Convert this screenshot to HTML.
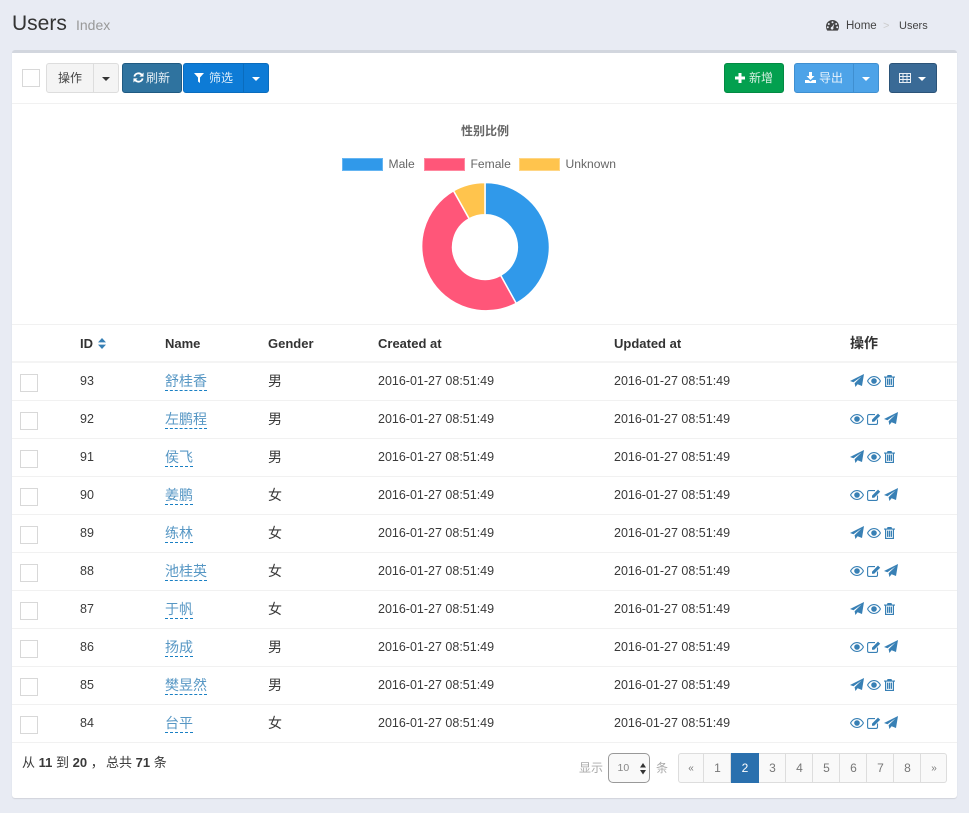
<!DOCTYPE html>
<html><head><meta charset="utf-8">
<style>
html,body{margin:0;padding:0;width:969px;height:813px;overflow:hidden;background:#e8ebf3;font-family:"Liberation Sans","Noto Sans CJK SC",sans-serif;color:#333;font-size:13px}
.a{position:absolute;white-space:nowrap}
#box{position:absolute;left:12px;top:50px;width:945px;height:745px;background:#fff;border-top:3px solid #d2d6de;border-radius:3px;box-shadow:0 1px 1px rgba(0,0,0,.1)}
.b{position:absolute;top:63px;height:30px;box-sizing:border-box;border:1px solid;text-align:center;line-height:28px;font-size:12px;color:#fff;white-space:nowrap}
.car{display:inline-block;width:0;height:0;border-left:4px solid transparent;border-right:4px solid transparent;border-top:4px solid currentColor;vertical-align:middle}
.l{position:absolute;left:12px;width:945px;height:1px;background:#f1f1f1}
.cb{position:absolute;left:20px;width:18px;height:18px;box-sizing:border-box;border:1px solid #d8d8d8;background:#fff}
.t{position:absolute;font-size:12.5px;white-space:nowrap;color:#3a3a3a;line-height:16px}
.n{position:absolute;left:165px;font-size:14px;line-height:18px;color:#5797c4;border-bottom:1px dashed #1a80c4;white-space:nowrap;height:18px}
.g{position:absolute;left:268px;font-size:14px;line-height:18px;color:#3a3a3a}
.h{position:absolute;top:336px;font-size:13px;font-weight:bold;line-height:16px;color:#333;white-space:nowrap}
.p{position:absolute;top:753px;height:30px;box-sizing:border-box;border:1px solid #ddd;border-left:0;padding-left:1px;background:#f9f9f9;color:#777;font-size:12px;line-height:29px;text-align:center}
svg{position:absolute;overflow:visible}
</style></head><body>
<svg width="0" height="0" style="position:absolute"><defs>
<symbol id="pl" viewBox="0 0 14 13"><path fill="#3880b5" d="M14 0L12 12 7.600 10.200 5.400 13 4.600 9.200 11.500 2.500 3.500 8.200 0 7Z"/></symbol>
<symbol id="ey" viewBox="0 0 14 10"><path fill="#3880b5" fill-rule="evenodd" d="M7 0C10 0 12.600 2 14 5 12.600 8 10 10 7 10 4 10 1.400 8 0 5 1.400 2 4 0 7 0ZM7 1.100C4.700 1.100 2.500 2.600 1.200 5 2.500 7.400 4.700 8.900 7 8.900 9.300 8.900 11.500 7.400 12.800 5 11.500 2.600 9.300 1.100 7 1.100ZM7 2.200A2.800 2.800 0 1 1 7 7.800 2.800 2.800 0 1 1 7 2.200Z"/></symbol>
<symbol id="tr" viewBox="0 0 11 12"><path fill="#3880b5" fill-rule="evenodd" d="M3.500 0H7.500L8 1.500H11V2.600H10V12H1V2.600H0V1.500H3ZM2.200 2.600V10.900H8.800V2.600ZM3 3.600H4.300V9.900H3ZM4.900 3.600H6.100V9.900H4.900ZM6.700 3.600H8V9.900H6.700Z"/></symbol>
<symbol id="ed" viewBox="0 0 14 12"><path fill="none" stroke="#3880b5" stroke-width="1.100" d="M10.500 6.500V10A1.400 1.400 0 0 1 9.100 11.400H2A1.400 1.400 0 0 1 .6 10V3A1.400 1.400 0 0 1 2 1.600H8"/><path fill="#3880b5" d="M11 .6L13.200 2.800 7.200 8.800H5V6.600Z"/></symbol>
</defs></svg>

<div class="a" style="left:12px;top:9px;font-size:21px;line-height:30px;color:#333">Users</div>
<div class="a" style="left:76px;top:16px;font-size:14px;line-height:18px;color:#999">Index</div>
<svg style="left:826px;top:20px" width="13" height="11" viewBox="0 0 13 11"><path fill="#444" fill-rule="evenodd" d="M6.500 0A6.500 6.500 0 0 1 13 6.500C13 8 12.500 9.500 11.700 10.600H1.300C.5 9.500 0 8 0 6.500A6.500 6.500 0 0 1 6.500 0ZM6.500 1.300A1 1 0 1 0 6.500 3.300 1 1 0 1 0 6.500 1.300ZM2.800 3A1 1 0 1 0 2.800 5 1 1 0 1 0 2.800 3ZM10.200 3A1 1 0 1 0 10.200 5 1 1 0 1 0 10.200 3ZM1.800 6.300A1 1 0 1 0 1.800 8.300 1 1 0 1 0 1.800 6.300ZM11.200 6.300A1 1 0 1 0 11.200 8.300 1 1 0 1 0 11.200 6.300ZM8.300 3.500L6 6.800A1.400 1.400 0 1 0 7.300 7.500Z"/></svg>
<div class="a" style="left:846px;top:19px;font-size:11.500px;line-height:15px;color:#444">Home</div>
<div class="a" style="left:883px;top:19px;font-size:11px;line-height:15px;color:#ccc">&gt;</div>
<div class="a" style="left:899px;top:19px;font-size:11px;line-height:15px;color:#444">Users</div>

<div id="box"></div>

<div class="a" style="left:22px;top:69px;width:18px;height:18px;box-sizing:border-box;border:1px solid #d8d8d8"></div>
<div class="b" style="left:46px;width:48px;background:#f4f4f4;border-color:#ddd;color:#444;border-radius:3px 0 0 3px">操作</div>
<div class="b" style="left:93px;width:26px;background:#f4f4f4;border-color:#ddd;color:#333;border-radius:0 3px 3px 0"><span class="car"></span></div>
<div class="b" style="left:122px;width:60px;background:#2f739f;border-color:#1f5a82;border-radius:3px;color:#e4eef5"><svg style="left:10px;top:8px" width="11" height="11" viewBox="0 0 12 12"><path fill="none" stroke="#fff" stroke-width="2" d="M1.500 5A4.600 4.600 0 0 1 9.800 3.500M10.500 7A4.600 4.600 0 0 1 2.200 8.500"/><path fill="#fff" d="M11.500 .5V5H7ZM.5 11.500V7H5Z"/></svg><span style="position:absolute;left:23px;top:0">刷新</span></div>
<div class="b" style="left:183px;width:61px;background:#0d7bd6;border-color:#0a6cbd;border-radius:3px 0 0 3px;color:#dcedfa"><svg style="left:10px;top:9px" width="10" height="10" viewBox="0 0 10 10"><path fill="#fff" d="M0 0H10L6 4.500V10L4 8.500V4.500Z"/></svg><span style="position:absolute;left:25px;top:0">筛选</span></div>
<div class="b" style="left:243px;width:26px;background:#0d7bd6;border-color:#0a6cbd;border-radius:0 3px 3px 0"><span class="car"></span></div>
<div class="b" style="left:724px;width:60px;background:#03a04f;border-color:#028a43;border-radius:3px;color:#d6f0e1"><svg style="left:10px;top:9px" width="10" height="10" viewBox="0 0 10 10"><path fill="#fff" d="M3.500 0H6.500V3.500H10V6.500H6.500V10H3.500V6.500H0V3.500H3.500Z"/></svg><span style="position:absolute;left:24px;top:0">新增</span></div>
<div class="b" style="left:794px;width:60px;background:#4da3e8;border-color:#3f8fd0;border-radius:3px 0 0 3px;color:#e8f3fc"><svg style="left:10px;top:8px" width="11" height="11" viewBox="0 0 11 11"><path fill="#fff" d="M4 0H7V4H9.500L5.500 8 1.500 4H4ZM0 8H3.500L5.500 9.500 7.500 8H11V11H0Z"/></svg><span style="position:absolute;left:24px;top:0">导出</span></div>
<div class="b" style="left:853px;width:26px;background:#4da3e8;border-color:#3f8fd0;border-radius:0 3px 3px 0"><span class="car"></span></div>
<div class="b" style="left:889px;width:48px;background:#3a6a96;border-color:#2b5378;border-radius:3px"><svg style="left:9px;top:9px" width="12" height="10" viewBox="0 0 12 10"><path fill="none" stroke="#e8eef4" stroke-width="1" d="M.5 .5H11.500V9.500H.5ZM.5 3.500H11.500M.5 6.500H11.500M4 .5V9.500M8 .5V9.500"/></svg><span class="car" style="position:absolute;left:28px;top:13px"></span></div>

<div class="l" style="top:103px"></div>

<div class="a" style="left:461px;top:123px;font-size:12px;font-weight:bold;line-height:16px;color:#666">性别比例</div>
<div class="a" style="left:342px;top:158px;width:41px;height:13px;box-sizing:border-box;background:#3099ea;border:1px solid #65b5f2"></div>
<div class="a" style="left:388.500px;top:156px;font-size:12.100px;line-height:16px;color:#666">Male</div>
<div class="a" style="left:424px;top:158px;width:41px;height:13px;box-sizing:border-box;background:#ff5679;border:1px solid #ff88a0"></div>
<div class="a" style="left:470.500px;top:156px;font-size:12.100px;line-height:16px;color:#666">Female</div>
<div class="a" style="left:519px;top:158px;width:41px;height:13px;box-sizing:border-box;background:#ffc44d;border:1px solid #ffd685"></div>
<div class="a" style="left:565.500px;top:156px;font-size:12.100px;line-height:16px;color:#666">Unknown</div>
<svg style="left:419.800px;top:182.300px" width="130" height="130" viewBox="-65 -65 130 130">
<g stroke="#fff" stroke-width="1.500">
<path fill="#3099ea" d="M0 -64.500A64.500 64.500 0 0 1 31.200 56.400L15.600 28.300A32.300 32.300 0 0 0 0 -32.300Z"/>
<path fill="#ff5679" d="M31.200 56.400A64.500 64.500 0 0 1 -31.500 -56.300L-15.800 -28.200A32.300 32.300 0 0 0 15.600 28.300Z"/>
<path fill="#ffc44d" d="M-31.500 -56.300A64.500 64.500 0 0 1 0 -64.500V-32.300A32.300 32.300 0 0 0 -15.800 -28.200Z"/>
</g></svg>

<div class="l" style="top:324px"></div>
<div class="h" style="left:80px">ID</div>
<svg style="left:98px;top:337.500px" width="8" height="11" viewBox="0 0 8 11"><path fill="#3880b5" d="M4 0L8 4.400H0ZM0 6.600H8L4 11Z"/></svg>
<div class="h" style="left:165px">Name</div>
<div class="h" style="left:268px">Gender</div>
<div class="h" style="left:378px">Created at</div>
<div class="h" style="left:614px">Updated at</div>
<div class="h" style="left:850px;font-size:14px;top:334px;line-height:18px">操作</div>
<div class="l" style="top:361px;height:2px;background:#f4f4f4"></div>

<div class="cb" style="top:374px"></div><div class="t" style="left:80px;top:373px">93</div><div class="n" style="top:372px">舒桂香</div><div class="g" style="top:372px">男</div><div class="t" style="left:378px;top:373px">2016-01-27 08:51:49</div><div class="t" style="left:614px;top:373px">2016-01-27 08:51:49</div>
<svg style="left:850px;top:374px" width="14" height="13"><use href="#pl" width="14" height="13"/></svg><svg style="left:867px;top:376px" width="14" height="10"><use href="#ey" width="14" height="10"/></svg><svg style="left:884px;top:375px" width="11" height="12"><use href="#tr" width="11" height="12"/></svg>
<div class="l" style="top:400px"></div>

<div class="cb" style="top:412px"></div><div class="t" style="left:80px;top:411px">92</div><div class="n" style="top:410px">左鹏程</div><div class="g" style="top:410px">男</div><div class="t" style="left:378px;top:411px">2016-01-27 08:51:49</div><div class="t" style="left:614px;top:411px">2016-01-27 08:51:49</div>
<svg style="left:850px;top:414px" width="14" height="10"><use href="#ey" width="14" height="10"/></svg><svg style="left:867px;top:412.500px" width="14" height="12"><use href="#ed" width="14" height="12"/></svg><svg style="left:884px;top:412px" width="14" height="13"><use href="#pl" width="14" height="13"/></svg>
<div class="l" style="top:438px"></div>

<div class="cb" style="top:450px"></div><div class="t" style="left:80px;top:449px">91</div><div class="n" style="top:448px">侯飞</div><div class="g" style="top:448px">男</div><div class="t" style="left:378px;top:449px">2016-01-27 08:51:49</div><div class="t" style="left:614px;top:449px">2016-01-27 08:51:49</div>
<svg style="left:850px;top:450px" width="14" height="13"><use href="#pl" width="14" height="13"/></svg><svg style="left:867px;top:452px" width="14" height="10"><use href="#ey" width="14" height="10"/></svg><svg style="left:884px;top:451px" width="11" height="12"><use href="#tr" width="11" height="12"/></svg>
<div class="l" style="top:476px"></div>

<div class="cb" style="top:488px"></div><div class="t" style="left:80px;top:487px">90</div><div class="n" style="top:486px">姜鹏</div><div class="g" style="top:486px">女</div><div class="t" style="left:378px;top:487px">2016-01-27 08:51:49</div><div class="t" style="left:614px;top:487px">2016-01-27 08:51:49</div>
<svg style="left:850px;top:490px" width="14" height="10"><use href="#ey" width="14" height="10"/></svg><svg style="left:867px;top:488.500px" width="14" height="12"><use href="#ed" width="14" height="12"/></svg><svg style="left:884px;top:488px" width="14" height="13"><use href="#pl" width="14" height="13"/></svg>
<div class="l" style="top:514px"></div>

<div class="cb" style="top:526px"></div><div class="t" style="left:80px;top:525px">89</div><div class="n" style="top:524px">练林</div><div class="g" style="top:524px">女</div><div class="t" style="left:378px;top:525px">2016-01-27 08:51:49</div><div class="t" style="left:614px;top:525px">2016-01-27 08:51:49</div>
<svg style="left:850px;top:526px" width="14" height="13"><use href="#pl" width="14" height="13"/></svg><svg style="left:867px;top:528px" width="14" height="10"><use href="#ey" width="14" height="10"/></svg><svg style="left:884px;top:527px" width="11" height="12"><use href="#tr" width="11" height="12"/></svg>
<div class="l" style="top:552px"></div>

<div class="cb" style="top:564px"></div><div class="t" style="left:80px;top:563px">88</div><div class="n" style="top:562px">池桂英</div><div class="g" style="top:562px">女</div><div class="t" style="left:378px;top:563px">2016-01-27 08:51:49</div><div class="t" style="left:614px;top:563px">2016-01-27 08:51:49</div>
<svg style="left:850px;top:566px" width="14" height="10"><use href="#ey" width="14" height="10"/></svg><svg style="left:867px;top:564.500px" width="14" height="12"><use href="#ed" width="14" height="12"/></svg><svg style="left:884px;top:564px" width="14" height="13"><use href="#pl" width="14" height="13"/></svg>
<div class="l" style="top:590px"></div>

<div class="cb" style="top:602px"></div><div class="t" style="left:80px;top:601px">87</div><div class="n" style="top:600px">于帆</div><div class="g" style="top:600px">女</div><div class="t" style="left:378px;top:601px">2016-01-27 08:51:49</div><div class="t" style="left:614px;top:601px">2016-01-27 08:51:49</div>
<svg style="left:850px;top:602px" width="14" height="13"><use href="#pl" width="14" height="13"/></svg><svg style="left:867px;top:604px" width="14" height="10"><use href="#ey" width="14" height="10"/></svg><svg style="left:884px;top:603px" width="11" height="12"><use href="#tr" width="11" height="12"/></svg>
<div class="l" style="top:628px"></div>

<div class="cb" style="top:640px"></div><div class="t" style="left:80px;top:639px">86</div><div class="n" style="top:638px">扬成</div><div class="g" style="top:638px">男</div><div class="t" style="left:378px;top:639px">2016-01-27 08:51:49</div><div class="t" style="left:614px;top:639px">2016-01-27 08:51:49</div>
<svg style="left:850px;top:642px" width="14" height="10"><use href="#ey" width="14" height="10"/></svg><svg style="left:867px;top:640.500px" width="14" height="12"><use href="#ed" width="14" height="12"/></svg><svg style="left:884px;top:640px" width="14" height="13"><use href="#pl" width="14" height="13"/></svg>
<div class="l" style="top:666px"></div>

<div class="cb" style="top:678px"></div><div class="t" style="left:80px;top:677px">85</div><div class="n" style="top:676px">樊昱然</div><div class="g" style="top:676px">男</div><div class="t" style="left:378px;top:677px">2016-01-27 08:51:49</div><div class="t" style="left:614px;top:677px">2016-01-27 08:51:49</div>
<svg style="left:850px;top:678px" width="14" height="13"><use href="#pl" width="14" height="13"/></svg><svg style="left:867px;top:680px" width="14" height="10"><use href="#ey" width="14" height="10"/></svg><svg style="left:884px;top:679px" width="11" height="12"><use href="#tr" width="11" height="12"/></svg>
<div class="l" style="top:704px"></div>

<div class="cb" style="top:716px"></div><div class="t" style="left:80px;top:715px">84</div><div class="n" style="top:714px">台平</div><div class="g" style="top:714px">女</div><div class="t" style="left:378px;top:715px">2016-01-27 08:51:49</div><div class="t" style="left:614px;top:715px">2016-01-27 08:51:49</div>
<svg style="left:850px;top:718px" width="14" height="10"><use href="#ey" width="14" height="10"/></svg><svg style="left:867px;top:716.500px" width="14" height="12"><use href="#ed" width="14" height="12"/></svg><svg style="left:884px;top:716px" width="14" height="13"><use href="#pl" width="14" height="13"/></svg>
<div class="l" style="top:742px"></div>

<div class="a" style="left:22px;top:754px;font-size:13px;line-height:18px;color:#3a3a3a">从 <b>11</b> 到 <b>20</b> ，</div>
<div class="a" style="left:106px;top:754px;font-size:13px;line-height:18px;color:#3a3a3a">总共 <b>71</b> 条</div>
<div class="a" style="left:579px;top:760px;font-size:12px;line-height:16px;color:#aaa">显示</div>
<div class="a" style="left:608px;top:753px;width:42px;height:30px;box-sizing:border-box;border:1px solid #999;border-radius:5px;background:#f9f9f9"></div>
<div class="a" style="left:617.500px;top:761px;font-size:10.500px;line-height:14px;color:#888">10</div>
<svg style="left:639.500px;top:762.500px" width="6" height="11.500" viewBox="0 0 6 11.500"><path fill="#333" d="M3 0L6 4.500H0ZM0 7H6L3 11.500Z"/></svg>
<div class="a" style="left:656px;top:760px;font-size:12px;line-height:16px;color:#aaa">条</div>

<div class="p" style="left:678px;width:26px;border-left:1px solid #ddd;padding-left:0;border-radius:3px 0 0 3px;font-size:10px">«</div>
<div class="p" style="left:704px;width:27px">1</div>
<div class="p" style="left:731px;width:28px;background:#2a70ae;border-color:#2a70ae;color:#fff">2</div>
<div class="p" style="left:759px;width:27px">3</div>
<div class="p" style="left:786px;width:27px">4</div>
<div class="p" style="left:813px;width:27px">5</div>
<div class="p" style="left:840px;width:27px">6</div>
<div class="p" style="left:867px;width:27px">7</div>
<div class="p" style="left:894px;width:27px">8</div>
<div class="p" style="left:921px;width:26px;border-radius:0 3px 3px 0;font-size:10px">»</div>
</body></html>
